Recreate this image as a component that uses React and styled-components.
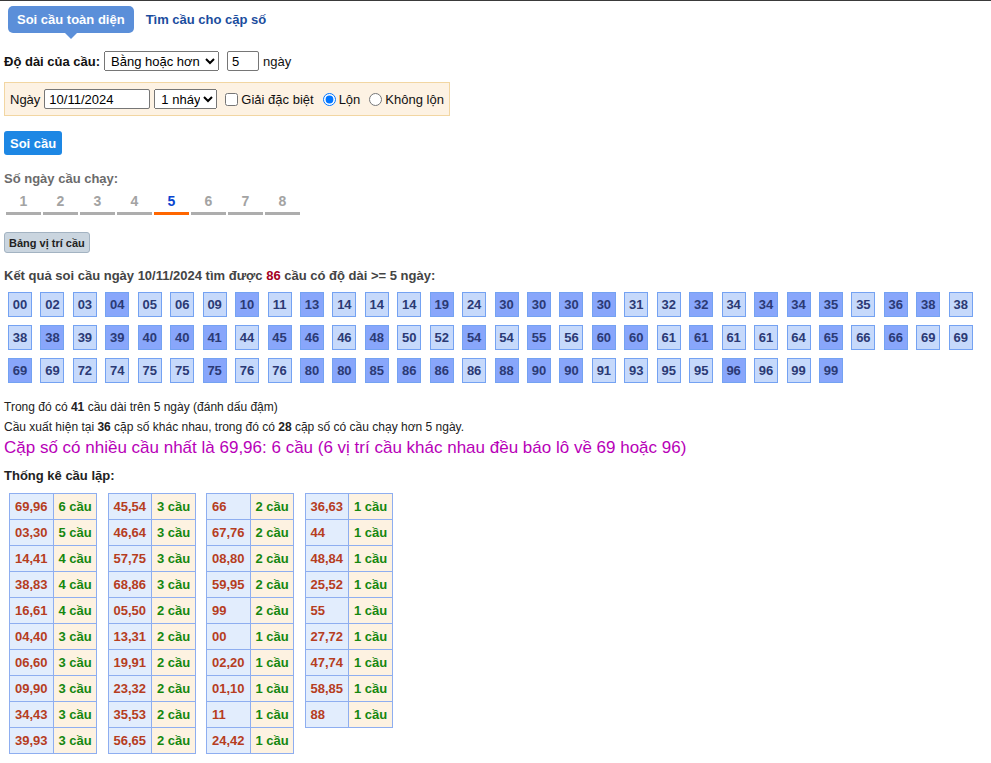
import React from "react";
import styled, { createGlobalStyle } from "styled-components";

const Global = createGlobalStyle`
  html, body { margin: 0; padding: 0; background: #fff; }
  body { font-family: "Liberation Sans", Arial, sans-serif; font-size: 13px; color: #222; }
`;

const Page = styled.div`
  border-top: 1px solid #3a3a3a;
  padding: 0 4px 10px 4px;
`;

const TabBar = styled.div`
  display: flex;
  align-items: center;
  margin-top: 5px;
  height: 27px;
`;

const ActiveTab = styled.div`
  position: relative;
  margin-left: 4px;
  height: 27px;
  line-height: 27px;
  padding: 0 9px;
  background: #5b8fd9;
  color: #fff;
  font-weight: bold;
  font-size: 13px;
  border-radius: 5px;
  &::after {
    content: "";
    position: absolute;
    left: 50%;
    bottom: -6px;
    transform: translateX(-50%);
    border-left: 6px solid transparent;
    border-right: 6px solid transparent;
    border-top: 6px solid #5b8fd9;
  }
`;

const TabLink = styled.a`
  margin-left: 12px;
  color: #1b4d9e;
  font-weight: bold;
  font-size: 13px;
  text-decoration: none;
`;

const FieldRow = styled.div`
  display: flex;
  align-items: center;
  margin-top: 18px;
  height: 20px;
`;

const BoldLabel = styled.span`
  font-weight: bold;
  color: #111;
`;

const Select = styled.select`
  font-family: "Liberation Sans", Arial, sans-serif;
  font-size: 13px;
  height: 20px;
  width: ${(p) => p.$w}px;
  margin-left: ${(p) => p.$ml}px;
  padding: 0 0 0 2px;
  color: #000;
`;

const TextInput = styled.input`
  font-family: "Liberation Sans", Arial, sans-serif;
  font-size: 13px;
  height: 20px;
  box-sizing: border-box;
  width: ${(p) => p.$w}px;
  margin: 0 0 0 ${(p) => p.$ml}px;
  padding: 1px 4px;
  border: 1px solid #767676;
  border-radius: 2px;
`;

const Text = styled.span`
  margin-left: ${(p) => p.$ml || 0}px;
  color: #111;
`;

const FilterBox = styled.div`
  display: inline-flex;
  align-items: center;
  margin-top: 11px;
  height: 32px;
  padding: 0 5px;
  border: 1px solid #f2d6a2;
  background: #fdf2e3;
`;

const Check = styled.input`
  width: 13px;
  height: 13px;
  margin: 0 0 0 ${(p) => p.$ml}px;
`;

const Block = styled.div`
  margin-top: ${(p) => p.$mt}px;
`;

const PrimaryButton = styled.button`
  height: 24px;
  padding: 0 6px;
  background: #1d87e4;
  color: #fff;
  border: none;
  border-radius: 3px;
  font-family: "Liberation Sans", Arial, sans-serif;
  font-weight: bold;
  font-size: 13px;
`;

const SectionLabel = styled.div`
  margin-top: 16px;
  font-weight: bold;
  font-size: 13px;
  line-height: 16px;
  color: #6b6b6b;
`;

const DayTabs = styled.div`
  display: flex;
  margin-top: 5px;
  padding-left: 2px;
  gap: 2px;
`;

const DayTab = styled.div`
  width: 35px;
  text-align: center;
  font-weight: bold;
  font-size: 14px;
  line-height: 18px;
  padding-bottom: 2px;
  color: ${(p) => (p.$active ? "#0a45d0" : "#a3a3a3")};
  border-bottom: 3px solid ${(p) => (p.$active ? "#ff6600" : "#adadad")};
`;

const GrayButton = styled.button`
  height: 21px;
  padding: 0 4px;
  background: #cad5df;
  border: 1px solid #a3b3c2;
  border-radius: 3px;
  color: #222;
  font-family: "Liberation Sans", Arial, sans-serif;
  font-weight: bold;
  font-size: 11px;
`;

const ResultTitle = styled.div`
  margin-top: 15px;
  font-weight: bold;
  font-size: 13px;
  line-height: 16px;
  color: #444;
`;

const Red = styled.span`
  color: #a50021;
`;

const NumGrid = styled.div`
  display: flex;
  flex-wrap: wrap;
  column-gap: 8.45px;
  row-gap: 8px;
  margin-top: 8px;
  padding-left: 4px;
  width: 975px;
`;

const NumBox = styled.div`
  box-sizing: border-box;
  width: 24px;
  height: 25px;
  line-height: 23px;
  text-align: center;
  font-weight: bold;
  font-size: 13px;
  color: #2b3a75;
  border: 1px solid #74a2f2;
  background: ${(p) => (p.$dark ? "#88a6fb" : "#c6d9fb")};
`;

const Note = styled.div`
  font-size: 12px;
  line-height: 20px;
  color: #222;
  margin-top: ${(p) => p.$mt || 0}px;
`;

const Highlight = styled.div`
  font-size: 17px;
  line-height: 22px;
  color: #b800b8;
`;

const StatTitle = styled.div`
  margin-top: 9px;
  font-weight: bold;
  font-size: 13px;
  line-height: 16px;
  color: #222;
`;

const Tables = styled.div`
  display: flex;
  align-items: flex-start;
  column-gap: 10.5px;
  margin-top: 9px;
  padding-left: 5px;
`;

const StatTable = styled.table`
  border-collapse: collapse;
  border: 1px solid #8eaef0;
`;

const Cell = styled.td`
  border: 1px solid #8eaef0;
  width: 37.5px;
  height: 25px;
  padding: 0 0 0 5px;
  white-space: nowrap;
  font-weight: bold;
  font-size: 13px;
  line-height: 16px;
  background: ${(p) => (p.$count ? "#fdf2e1" : "#e2edfd")};
  color: ${(p) => (p.$count ? "#15870f" : "#b63d1f")};
`;

const rows = [
  "00 02 03 *04 05 06 09 *10 11 *13 14 14 14 *19 24 *30 *30 *30 *30 31 32 *32 34 *34 *34 *35 35 *36 *38 38",
  "38 *38 39 *39 *40 *40 *41 44 *45 *46 46 *48 50 52 *54 54 *55 56 *60 *60 61 *61 61 61 64 *65 66 *66 69 69",
  "*69 69 72 74 75 75 *75 76 76 *80 *80 *85 *86 *86 86 *88 *90 *90 91 93 95 95 *96 96 99 *99",
];
const nums = rows.join(" ").split(" ").map((t) => ({ v: t.replace("*", ""), dark: t.startsWith("*") }));

const tables = [
  [["69,96", 6], ["03,30", 5], ["14,41", 4], ["38,83", 4], ["16,61", 4], ["04,40", 3], ["06,60", 3], ["09,90", 3], ["34,43", 3], ["39,93", 3]],
  [["45,54", 3], ["46,64", 3], ["57,75", 3], ["68,86", 3], ["05,50", 2], ["13,31", 2], ["19,91", 2], ["23,32", 2], ["35,53", 2], ["56,65", 2]],
  [["66", 2], ["67,76", 2], ["08,80", 2], ["59,95", 2], ["99", 2], ["00", 1], ["02,20", 1], ["01,10", 1], ["11", 1], ["24,42", 1]],
  [["36,63", 1], ["44", 1], ["48,84", 1], ["25,52", 1], ["55", 1], ["27,72", 1], ["47,74", 1], ["58,85", 1], ["88", 1]],
];

export default function App() {
  return (
    <Page>
      <Global />
      <TabBar>
        <ActiveTab>Soi cầu toàn diện</ActiveTab>
        <TabLink href="#">Tìm cầu cho cặp số</TabLink>
      </TabBar>

      <FieldRow>
        <BoldLabel>Độ dài của cầu:</BoldLabel>
        <Select $w={115} $ml={4} defaultValue="ge">
          <option value="ge">Bằng hoặc hơn</option>
          <option value="eq">Bằng</option>
        </Select>
        <TextInput $w={32} $ml={8} defaultValue="5" />
        <Text $ml={4}>ngày</Text>
      </FieldRow>

      <FilterBox>
        <Text>Ngày</Text>
        <TextInput $w={106} $ml={4} defaultValue="10/11/2024" />
        <Select $w={63} $ml={4} defaultValue="1">
          <option value="1">1 nháy</option>
          <option value="2">2 nháy</option>
        </Select>
        <Check type="checkbox" $ml={8} />
        <Text $ml={3}>Giải đặc biệt</Text>
        <Check type="radio" name="lon" defaultChecked $ml={9} />
        <Text $ml={3}>Lộn</Text>
        <Check type="radio" name="lon" $ml={9} />
        <Text $ml={3}>Không lộn</Text>
      </FilterBox>

      <Block $mt={15}>
        <PrimaryButton>Soi cầu</PrimaryButton>
      </Block>

      <SectionLabel>Số ngày cầu chạy:</SectionLabel>
      <DayTabs>
        {[1, 2, 3, 4, 5, 6, 7, 8].map((n) => (
          <DayTab key={n} $active={n === 5}>{n}</DayTab>
        ))}
      </DayTabs>

      <Block $mt={17}>
        <GrayButton>Bảng vị trí cầu</GrayButton>
      </Block>

      <ResultTitle>
        Kết quả soi cầu ngày 10/11/2024 tìm được <Red>86</Red> cầu có độ dài &gt;= 5 ngày:
      </ResultTitle>

      <NumGrid>
        {nums.map((n, i) => (
          <NumBox key={i} $dark={n.dark}>{n.v}</NumBox>
        ))}
      </NumGrid>

      <Note $mt={14}>
        Trong đó có <b>41</b> cầu dài trên 5 ngày (đánh dấu đậm)
      </Note>
      <Note>
        Cầu xuất hiện tại <b>36</b> cặp số khác nhau, trong đó có <b>28</b> cặp số có cầu chạy hơn 5 ngày.
      </Note>
      <Highlight>
        Cặp số có nhiều cầu nhất là 69,96: 6 cầu (6 vị trí cầu khác nhau đều báo lô về 69 hoặc 96)
      </Highlight>

      <StatTitle>Thống kê cầu lặp:</StatTitle>
      <Tables>
        {tables.map((t, ti) => (
          <StatTable key={ti}>
            <tbody>
              {t.map(([pair, c]) => (
                <tr key={pair}>
                  <Cell>{pair}</Cell>
                  <Cell $count>{c} cầu</Cell>
                </tr>
              ))}
            </tbody>
          </StatTable>
        ))}
      </Tables>
    </Page>
  );
}
